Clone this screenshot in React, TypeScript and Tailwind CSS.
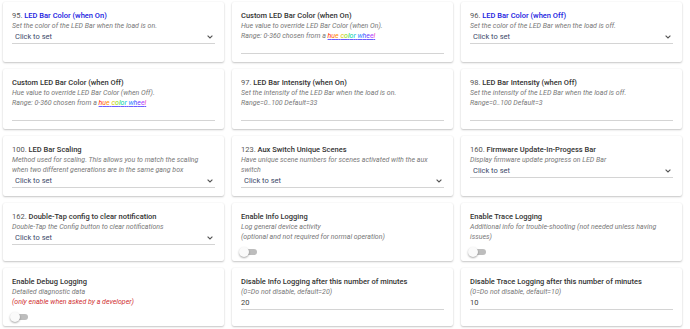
import React from 'react';

type Field =
  | { kind: 'select'; value: string }
  | { kind: 'input'; value: string }
  | { kind: 'toggle' };

type Setting = {
  num?: string;
  title: string;
  blue?: boolean;
  desc: React.ReactNode[];
  field: Field;
};

const hueLetters: [string, string][] = [
  ['h', 'text-[#ff2200]'],
  ['u', 'text-[#ff5a00]'],
  ['e', 'text-[#ff9000]'],
  [' ', ''],
  ['c', 'text-[#d8c800]'],
  ['o', 'text-[#8cdc00]'],
  ['l', 'text-[#22d840]'],
  ['o', 'text-[#00d49a]'],
  ['r', 'text-[#00c4d8]'],
  [' ', ''],
  ['w', 'text-[#2a86ff]'],
  ['h', 'text-[#3c55ff]'],
  ['e', 'text-[#6e3cff]'],
  ['e', 'text-[#ac3cff]'],
  ['l', 'text-[#f03cc8]'],
];

const HueWheel = () => (
  <span className="underline decoration-[#6b5cff]">
    {hueLetters.map(([ch, cls], i) => (
      <span key={i} className={cls}>
        {ch}
      </span>
    ))}
  </span>
);

const settings: Setting[] = [
  {
    num: '95.',
    title: 'LED Bar Color (when On)',
    blue: true,
    desc: ['Set the color of the LED Bar when the load is on.'],
    field: { kind: 'select', value: 'Click to set' },
  },
  {
    title: 'Custom LED Bar Color (when On)',
    desc: [
      'Hue value to override LED Bar Color (when On).',
      <>
        Range: 0-360 chosen from a <HueWheel />
      </>,
    ],
    field: { kind: 'input', value: '' },
  },
  {
    num: '96.',
    title: 'LED Bar Color (when Off)',
    blue: true,
    desc: ['Set the color of the LED Bar when the load is off.'],
    field: { kind: 'select', value: 'Click to set' },
  },
  {
    title: 'Custom LED Bar Color (when Off)',
    desc: [
      'Hue value to override LED Bar Color (when Off).',
      <>
        Range: 0-360 chosen from a <HueWheel />
      </>,
    ],
    field: { kind: 'input', value: '' },
  },
  {
    num: '97.',
    title: 'LED Bar Intensity (when On)',
    desc: ['Set the intensity of the LED Bar when the load is on.', 'Range=0..100 Default=33'],
    field: { kind: 'input', value: '' },
  },
  {
    num: '98.',
    title: 'LED Bar Intensity (when Off)',
    desc: ['Set the intensity of the LED Bar when the load is off.', 'Range=0..100 Default=3'],
    field: { kind: 'input', value: '' },
  },
  {
    num: '100.',
    title: 'LED Bar Scaling',
    desc: [
      'Method used for scaling. This allows you to match the scaling',
      'when two different generations are in the same gang box',
    ],
    field: { kind: 'select', value: 'Click to set' },
  },
  {
    num: '123.',
    title: 'Aux Switch Unique Scenes',
    desc: ['Have unique scene numbers for scenes activated with the aux', 'switch'],
    field: { kind: 'select', value: 'Click to set' },
  },
  {
    num: '160.',
    title: 'Firmware Update-In-Progess Bar',
    desc: ['Display firmware update progress on LED Bar'],
    field: { kind: 'select', value: 'Click to set' },
  },
  {
    num: '162.',
    title: 'Double-Tap config to clear notification',
    desc: ['Double-Tap the Config button to clear notifications'],
    field: { kind: 'select', value: 'Click to set' },
  },
  {
    title: 'Enable Info Logging',
    desc: ['Log general device activity', '(optional and not required for normal operation)'],
    field: { kind: 'toggle' },
  },
  {
    title: 'Enable Trace Logging',
    desc: ['Additional info for trouble-shooting (not needed unless having', 'issues)'],
    field: { kind: 'toggle' },
  },
  {
    title: 'Enable Debug Logging',
    desc: [
      'Detailed diagnostic data',
      <span className="text-[#d03030]">(only enable when asked by a developer)</span>,
    ],
    field: { kind: 'toggle' },
  },
  {
    title: 'Disable Info Logging after this number of minutes',
    desc: ['(0=Do not disable, default=20)'],
    field: { kind: 'input', value: '20' },
  },
  {
    title: 'Disable Trace Logging after this number of minutes',
    desc: ['(0=Do not disable, default=10)'],
    field: { kind: 'input', value: '10' },
  },
];

const Chevron = () => (
  <svg width="6" height="4" viewBox="0 0 6 4" className="text-[#555]">
    <path d="M0.6 0.6 L3 3 L5.4 0.6" fill="none" stroke="currentColor" strokeWidth="1.1" />
  </svg>
);

const FieldView = ({ field }: { field: Field }) => {
  if (field.kind === 'toggle') {
    return (
      <div className="flex items-center h-[16px] pt-[3px]">
        <div className="relative w-[16px] h-[6px] rounded-full bg-[#bdbdbd]">
          <div className="absolute left-[-2px] top-[-2px] w-[10px] h-[10px] rounded-full bg-[#fafafa] shadow-[0_1px_2px_rgba(0,0,0,0.35)]" />
        </div>
      </div>
    );
  }
  return (
    <div className="flex items-center justify-between h-[13px] mb-[5px] border-b border-[#d4d4d4]">
      <span
        className={
          field.kind === 'select'
            ? 'pl-[3px] text-[7.5px] text-[#3e4a6a]'
            : 'text-[7.5px] text-[#444]'
        }
      >
        {field.value}
      </span>
      {field.kind === 'select' && (
        <span className="pr-[2px] flex items-center">
          <Chevron />
        </span>
      )}
    </div>
  );
};

const Card = ({ s }: { s: Setting }) => (
  <div className="bg-white rounded-[2px] px-[9px] pt-[9px] pb-[3px] shadow-[0_1px_2px_rgba(0,0,0,0.22),0_0_2px_rgba(0,0,0,0.06)]">
    <div className="text-[7.5px] leading-[10px] text-[#333]">
      {s.num && <span className="text-[#555]">{s.num} </span>}
      <span className={s.blue ? 'font-medium text-[#2020e0]' : 'font-medium'}>{s.title}</span>
    </div>
    {s.desc.map((d, i) => (
      <div key={i} className="text-[7px] leading-[10px] italic text-[#777]">
        {d}
      </div>
    ))}
    <FieldView field={s.field} />
  </div>
);

const App = () => {
  return (
    <div
      className="w-[690px] h-[329px] bg-white overflow-hidden pl-[3px] pt-[2px]"
      style={{ fontFamily: 'Roboto, "Noto Sans", sans-serif' }}
    >
      <div className="grid grid-cols-[221px_221px_221px] gap-x-[8px] gap-y-[7px]">
        {settings.map((s, i) => (
          <Card key={i} s={s} />
        ))}
      </div>
    </div>
  );
};

export default App;
